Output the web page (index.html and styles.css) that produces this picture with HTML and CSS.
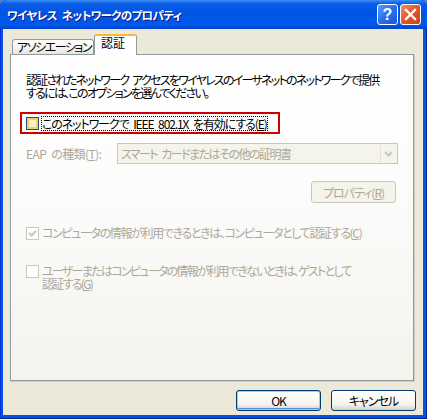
FILE: index.html
```html
<!DOCTYPE html>
<html lang="ja">
<head>
  <meta charset="UTF-8" />
  <title>ワイヤレス ネットワークのプロパティ</title>
  <link rel="stylesheet" href="styles.css">
</head>
<body>
  <div class="window">
    <!-- タイトルバー -->
    <div class="titlebar">
      <span class="title">ワイヤレス ネットワークのプロパティ</span>
      <div class="controls">
        <span class="ctl help">?</span>
        <span class="ctl close">
          <svg width="13" height="13" viewBox="0 0 13 13"><path d="M2 2 L11 11 M11 2 L2 11" stroke="#fff" stroke-width="2.4" stroke-linecap="square"/></svg>
        </span>
      </div>
    </div>

    <div class="client">
      <!-- タブ -->
      <div class="tabs">
        <div class="tab">アソシエーション</div>
        <div class="tab active">認証</div>
      </div>

      <div class="panel">
        <p class="desc">認証されたネットワーク アクセスをワイヤレスのイーサネットのネットワークで提供<br>するには、このオプションを選んでください。</p>

        <div class="highlight">
          <span class="check hover"></span>
          <span class="label focus">このネットワークで IEEE 802.1X を有効にする(<u>E</u>)</span>
        </div>

        <div class="eap-row">
          <span class="disabled-text eap-label">EAP の種類(<u>T</u>):</span>
          <div class="combo">
            <span class="combo-text">スマート カードまたはその他の証明書</span>
            <span class="combo-btn">
              <svg width="9" height="6" viewBox="0 0 9 6"><path d="M1 1 L4.5 4.5 L8 1" fill="none" stroke="#c9c7ba" stroke-width="2"/></svg>
            </span>
          </div>
        </div>

        <div class="props-row">
          <span class="btn disabled">プロパティ(<u>R</u>)</span>
        </div>

        <div class="opt opt-computer">
          <span class="check off">
            <svg width="11" height="11" viewBox="0 0 11 11"><path d="M2 5 L4.5 7.5 L9 3" fill="none" stroke="#c9c7ba" stroke-width="2"/></svg>
          </span>
          <span class="disabled-text">コンピュータの情報が利用できるときは、コンピュータとして認証する(<u>C</u>)</span>
        </div>

        <div class="opt opt-guest">
          <span class="check off"></span>
          <span class="disabled-text">ユーザーまたはコンピュータの情報が利用できないときは、ゲストとして<br>認証する(<u>G</u>)</span>
        </div>
      </div>

      <div class="buttons">
        <span class="btn default">OK</span>
        <span class="btn">キャンセル</span>
      </div>
    </div>
  </div>
</body>
</html>
```

FILE: styles.css
```css
body {
  margin: 0;
  background: #5a7fc0;
  font-family: "Noto Sans CJK JP", sans-serif;
  font-size: 12px;
  letter-spacing: -1px;
  word-spacing: 3px;
  font-feature-settings: "palt";
}
.window {
  width: 427px;
  height: 419px;
  display: flex;
  flex-direction: column;
  background: #0055e5;
  border-radius: 7px 7px 0 0;
  box-shadow: inset 1px 0 0 #0831d9, inset -1px 0 0 #001ea0, inset 0 -1px 0 #001ea0;
}
/* タイトルバー */
.titlebar {
  height: 29px;
  display: flex;
  align-items: center;
  padding: 0 6px 0 7px;
  border-radius: 7px 7px 0 0;
  background: linear-gradient(to bottom, #3d8df5 0%, #0a5ee8 12%, #0054e3 45%, #0058ec 85%, #0044c8 100%);
}
.title {
  flex: 1;
  color: #fff;
  font-weight: bold;
  font-size: 11.5px;
  letter-spacing: -0.65px;
  white-space: nowrap;
  text-shadow: 1px 1px 0 #0a1883;
}
.controls {
  display: flex;
  gap: 2px;
}
.ctl {
  width: 19px;
  height: 19px;
  border: 1px solid #fff;
  border-radius: 3px;
  display: flex;
  align-items: center;
  justify-content: center;
  color: #fff;
  font-family: "Liberation Sans", sans-serif;
  font-weight: bold;
  font-size: 16px;
  letter-spacing: 0;
}
.help {
  background: linear-gradient(135deg, #5a9bff 0%, #2a6ef0 50%, #1d55d6 100%);
}
.close {
  background: linear-gradient(135deg, #f0916a 0%, #e0542b 50%, #c9421b 100%);
}
/* クライアント領域 */
.client {
  flex: 1;
  margin: 0 4px 4px 3px;
  background: #ece9d8;
  padding: 6px 9px 0 7px;
  display: flex;
  flex-direction: column;
}
.tabs {
  display: flex;
  align-items: flex-end;
  height: 19px;
  padding-left: 2px;
  position: relative;
  z-index: 1;
}
.tab {
  height: 14px;
  padding: 0 2px 0 4px;
  border: 1px solid #919b9c;
  border-bottom: none;
  border-radius: 3px 3px 0 0;
  background: linear-gradient(to bottom, #fff 0%, #f3f3ef 60%, #e6e5de 100%);
  line-height: 14px;
  color: #000;
  letter-spacing: -1.5px;
  white-space: nowrap;
}
.tab.active {
  height: 19px;
  margin-bottom: -1px;
  padding: 0 11px 0 6px;
  background: #fff;
  border-top: 2px solid #f9b936;
  border-color: #f9b936 #919b9c #919b9c;
  line-height: 14px;
  letter-spacing: 0;
}
.panel {
  height: 325px;
  border: 1px solid #919b9c;
  box-shadow: 1px 1px 0 #d0cebf;
  background: linear-gradient(to bottom, #fff 0%, #fcfcfb 40%, #f4f3ee 100%);
  padding: 0 15px;
}
.desc {
  margin: 18px 0 0;
  line-height: 13px;
  color: #000;
  letter-spacing: -1.75px;
  white-space: nowrap;
}
.highlight {
  margin: 13px 0 0 -6px;
  width: 252px;
  height: 18px;
  border: 2px solid #cc0000;
  display: flex;
  align-items: center;
  padding-left: 4px;
}
.check {
  width: 11px;
  height: 11px;
  border: 1px solid #1c5180;
  background: #fff;
  flex-shrink: 0;
  display: flex;
  align-items: center;
  justify-content: center;
}
.check.hover {
  box-shadow: inset 0 0 0 2px #f9cb61;
  background: #fdf0c8;
}
.check.off {
  border-color: #cac8bb;
}
.label {
  margin-left: 3px;
  line-height: 13px;
  letter-spacing: -1.1px;
  white-space: nowrap;
}
.focus {
  outline: 1px dotted #000;
  outline-offset: 0;
}
.disabled-text {
  color: #aca899;
  white-space: nowrap;
}
.eap-row {
  margin-top: 9px;
  display: flex;
  align-items: center;
}
.eap-label {
  width: 91px;
  letter-spacing: -0.6px;
}
.combo {
  width: 280px;
  height: 19px;
  border: 1px solid #c9c7ba;
  background: #f5f4ea;
  display: flex;
  align-items: center;
}
.combo-text {
  flex: 1;
  padding-left: 3px;
  color: #aca899;
  letter-spacing: -1.5px;
}
.combo-btn {
  width: 15px;
  height: 17px;
  margin-right: 1px;
  border-left: 1px solid #e4e2d6;
  display: flex;
  align-items: center;
  justify-content: center;
}
.props-row {
  margin-top: 17px;
  display: flex;
  justify-content: flex-end;
  padding-right: 2px;
}
.btn {
  width: 83px;
  height: 19px;
  border: 1px solid #003c74;
  border-radius: 3px;
  background: linear-gradient(to bottom, #fff 0%, #f4f4f0 70%, #d6d0c5 100%);
  display: flex;
  align-items: center;
  justify-content: center;
  color: #000;
}
.btn.disabled {
  border-color: #c9c7ba;
  background: #f5f4ea;
  color: #aca899;
  height: 20px;
}
.btn.default {
  box-shadow: inset 0 0 0 1px #a8c7f5, inset 0 -1px 0 1px #5b8de3;
}
.opt {
  display: flex;
  align-items: flex-start;
}
.opt .check {
  margin-top: 1px;
}
.opt .disabled-text {
  margin-left: 3px;
  line-height: 13px;
}
.opt-computer {
  margin-top: 23px;
}
.opt-computer .disabled-text {
  letter-spacing: -1.35px;
}
.opt-guest {
  margin-top: 24px;
}
.opt-guest .disabled-text {
  letter-spacing: -1.7px;
}
.buttons {
  margin-top: 9px;
  display: flex;
  justify-content: flex-end;
  gap: 10px;
  margin-right: -2px;
}
```
